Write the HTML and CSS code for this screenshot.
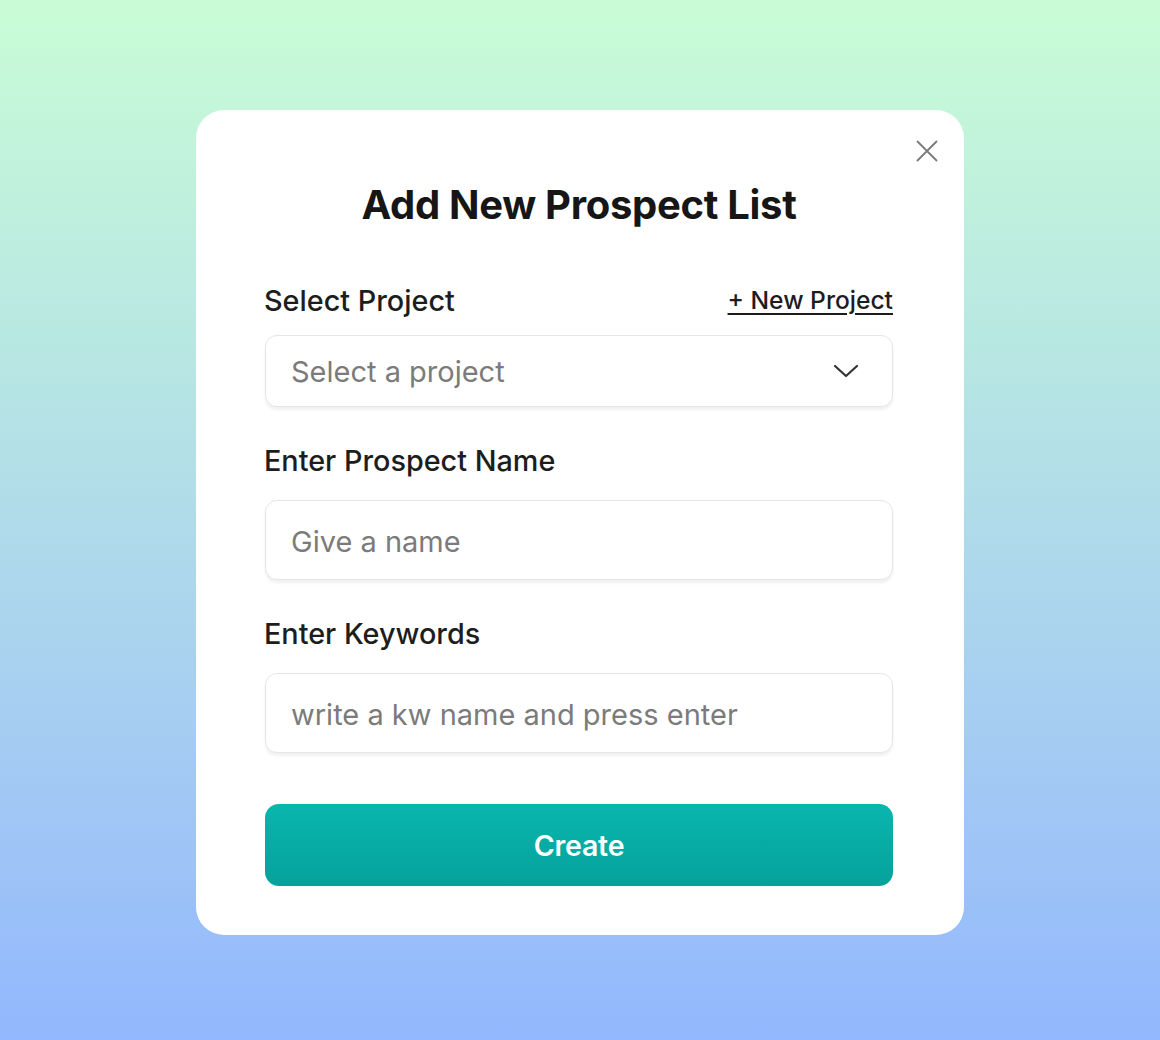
FILE: index.html
```html
<!DOCTYPE html>
<html lang="en">
<head>
<meta charset="utf-8">
<title>Add New Prospect List</title>
<link rel="stylesheet" href="styles.css">
</head>
<body>
<div class="page">
  <div class="modal">
    <button class="close" aria-label="Close">
      <svg width="22" height="22" viewBox="0 0 22 22"><path d="M1.5 1.5L20.5 20.5M20.5 1.5L1.5 20.5" stroke="#7a7a7a" stroke-width="1.8" fill="none" stroke-linecap="round"/></svg>
    </button>
    <h1 class="title">Add New Prospect List</h1>

    <div class="label-row">
      <span class="label">Select Project</span>
      <a class="link" href="#">+ New Project</a>
    </div>
    <div class="field select">
      <span class="placeholder">Select a project</span>
      <svg class="chev" width="26" height="14" viewBox="0 0 26 14"><path d="M2 2L13 12L24 2" stroke="#333" stroke-width="2.2" fill="none" stroke-linecap="round" stroke-linejoin="round"/></svg>
    </div>

    <div class="label-row gap2"><span class="label">Enter Prospect Name</span></div>
    <div class="field input"><span class="placeholder">Give a name</span></div>

    <div class="label-row gap2"><span class="label">Enter Keywords</span></div>
    <div class="field input"><span class="placeholder">write a kw name and press enter</span></div>

    <button class="create">Create</button>
  </div>
</div>
</body>
</html>
```

FILE: styles.css
```css
* { box-sizing: border-box; }
html, body { margin: 0; padding: 0; }
body {
  font-family: Inter, "Noto Sans", sans-serif;
  background: linear-gradient(180deg, #c9fcd6 0%, #b7e6e3 35%, #a8d0f0 65%, #93b7fd 100%);
  min-height: 1040px;
}
.page {
  height: 1040px;
  display: flex;
  align-items: flex-start;
  justify-content: center;
  padding-top: 110px;
}
.modal {
  position: relative;
  width: 768px;
  height: 825px;
  background: #fff;
  border-radius: 28px;
  padding: 73px 71px 48px 69px;
  display: flex;
  flex-direction: column;
}
.close {
  position: absolute;
  top: 30px;
  right: 26px;
  width: 22px;
  height: 22px;
  padding: 0;
  border: 0;
  background: none;
  display: flex;
}
.title {
  margin: 0;
  font-size: 40px;
  line-height: 44px;
  font-weight: 700;
  letter-spacing: -0.3px;
  color: #161616;
  text-align: center;
}
.label-row {
  display: flex;
  justify-content: space-between;
  align-items: center;
  height: 32px;
  margin-top: 57px;
  margin-bottom: 19px;
}
.label-row.gap2 {
  margin-top: 37px;
  margin-bottom: 24px;
}
.label {
  font-size: 28.8px;
  font-weight: 500;
  color: #1d1d1d;
  margin-left: -1px;
}
.link {
  font-size: 24.6px;
  font-weight: 500;
  color: #1d1d1d;
  text-decoration: underline;
  text-decoration-thickness: 1.5px;
  text-underline-offset: 4px;
}
.field {
  border: 1.5px solid #e6e6e6;
  border-radius: 12px;
  box-shadow: 0 3px 3px rgba(0,0,0,0.06);
  display: flex;
  align-items: center;
  padding: 0 33px 0 25px;
  background: #fff;
}
.select { height: 72px; justify-content: space-between; }
.input { height: 80px; padding-top: 3px; }
.placeholder {
  font-size: 29px;
  color: #7b7b7b;
}
.chev { display: block; }
.create {
  margin-top: 51px;
  height: 82px;
  border: 0;
  border-radius: 14px;
  background: linear-gradient(180deg, #09b6ad 0%, #04a29b 100%);
  color: #fff;
  font-family: Inter, "Noto Sans", sans-serif;
  font-size: 28.5px;
  font-weight: 600;
  letter-spacing: -0.2px;
  padding-top: 2px;
}
```
